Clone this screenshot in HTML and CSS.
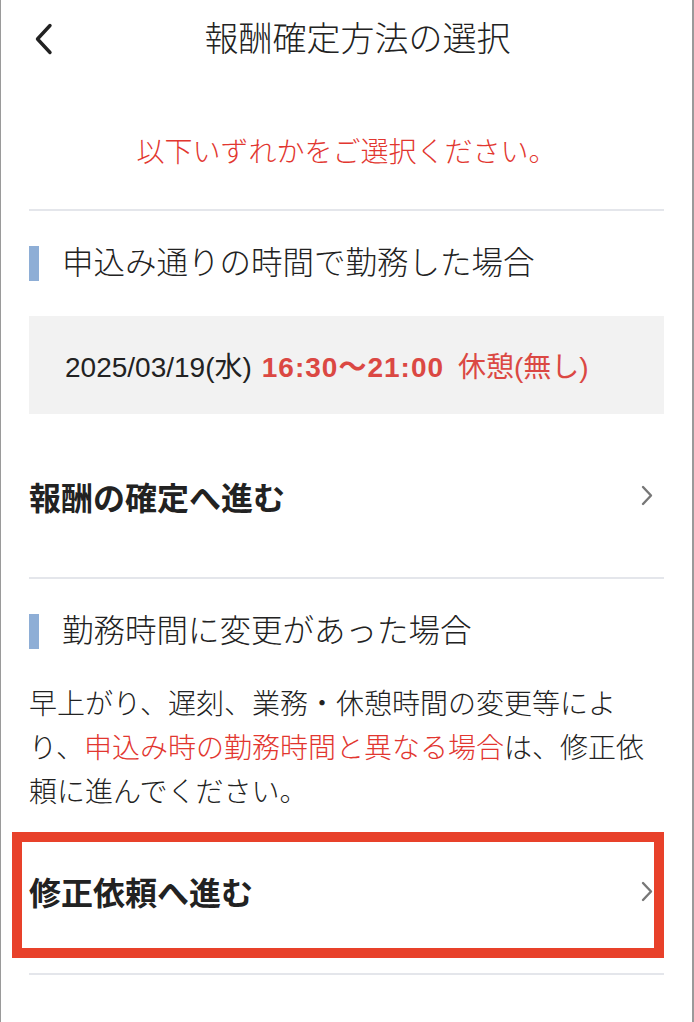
FILE: index.html
```html
<!DOCTYPE html>
<html lang="ja">
<head>
  <meta charset="UTF-8">
  <meta name="viewport" content="width=device-width, initial-scale=1.0">
  <title>報酬確定方法の選択</title>
  <link rel="stylesheet" href="styles.css">
</head>
<body>
  <div class="screen">
    <header class="header">
      <a href="#" class="back-btn" aria-label="戻る">
        <svg width="18" height="32" viewBox="0 0 18 32">
          <path d="M15 2.5 L2.5 16 L15 29.5" fill="none" stroke="#222" stroke-width="3.4" stroke-linecap="round" stroke-linejoin="round"/>
        </svg>
      </a>
      <h1 class="header-title">報酬確定方法の選択</h1>
    </header>

    <div class="content">
      <p class="notice">以下いずれかをご選択ください。</p>

      <section class="section">
        <h2 class="section-title">申込み通りの時間で勤務した場合</h2>
        <div class="shift-box">
          <span class="shift-date">2025/03/19(水)</span>
          <span class="shift-time">16:30〜21:00</span>
          <span class="shift-break">休憩(無し)</span>
        </div>
        <a href="#" class="link-row">
          <span class="link-label">報酬の確定へ進む</span>
          <svg class="link-arrow" width="12" height="21" viewBox="0 0 12 21">
            <path d="M2 2 L10 10.5 L2 19" fill="none" stroke="#777" stroke-width="2.4" stroke-linecap="round" stroke-linejoin="round"/>
          </svg>
        </a>
      </section>

      <section class="section">
        <h2 class="section-title">勤務時間に変更があった場合</h2>
        <p class="section-text">早上がり、遅刻、業務・休憩時間の変更等により、<span class="em">申込み時の勤務時間と異なる場合</span>は、修正依頼に進んでください。</p>
        <a href="#" class="link-row link-row--last">
          <span class="link-label">修正依頼へ進む</span>
          <svg class="link-arrow" width="12" height="21" viewBox="0 0 12 21">
            <path d="M2 2 L10 10.5 L2 19" fill="none" stroke="#777" stroke-width="2.4" stroke-linecap="round" stroke-linejoin="round"/>
          </svg>
          <span class="highlight"></span>
        </a>
      </section>
    </div>
  </div>
</body>
</html>
```

FILE: styles.css
```css
:root {
  --text-color: #222;
  --red: #e2362f;
  --red-time: #db4843;
  --accent-blue: #8eaed6;
  --divider: #e4e6eb;
  --box-bg: #f2f2f2;
  --frame: #9a9a9a;
}

* {
  box-sizing: border-box;
}

body {
  margin: 0;
  padding: 0;
  font-family: "Liberation Sans", "Noto Sans CJK JP", sans-serif;
  color: var(--text-color);
  background-color: white;
}

a {
  color: inherit;
  text-decoration: none;
}

.screen {
  width: 694px;
  min-height: 1022px;
  border-left: 1px solid var(--frame);
  border-right: 2px solid var(--frame);
  background-color: white;
}

/* Top bar */
.header {
  display: flex;
  align-items: center;
  height: 78px;
  padding: 0 30px 0 34px;
}

.back-btn {
  display: flex;
  width: 18px;
}

.header-title {
  flex: 1;
  margin: 0;
  text-align: center;
  font-size: 34px;
  font-weight: 300;
  line-height: 40px;
}

.content {
  padding: 0 28px;
}

.notice {
  margin: 0;
  padding: 55px 0 36px;
  border-bottom: 2px solid var(--divider);
  text-align: center;
  font-size: 28px;
  font-weight: 300;
  line-height: 40px;
  color: var(--red);
}

/* Sections */
.section {
  border-bottom: 2px solid var(--divider);
}

.section-title {
  display: flex;
  align-items: center;
  gap: 23px;
  margin: 35px 0 0;
  height: 35px;
  font-size: 31.5px;
  font-weight: 300;
  line-height: 35px;
}

.section-title::before {
  content: "";
  width: 10px;
  height: 35px;
  background-color: var(--accent-blue);
}

.shift-box {
  display: flex;
  align-items: center;
  height: 98px;
  margin-top: 35px;
  padding-left: 36px;
  background-color: var(--box-bg);
  font-size: 28px;
}

.shift-time {
  margin-left: 10px;
  font-weight: bold;
  letter-spacing: 1px;
  color: var(--red-time);
}

.shift-break {
  margin-left: 14px;
  color: var(--red-time);
}

.section-text {
  margin: 34px 0 0;
  font-size: 28px;
  font-weight: 300;
  line-height: 44px;
}

.section-text .em {
  color: var(--red);
}

/* Link rows */
.link-row {
  position: relative;
  display: flex;
  align-items: center;
  justify-content: space-between;
  height: 163px;
  padding-right: 11px;
}

.link-row--last {
  height: 158px;
  padding-bottom: 6px;
}

.link-label {
  font-size: 32px;
  font-weight: bold;
}

.link-arrow {
  display: block;
}

.highlight {
  position: absolute;
  left: -17px;
  right: 0;
  top: 17px;
  bottom: 15px;
  border: 10px solid #e8412a;
}
```
